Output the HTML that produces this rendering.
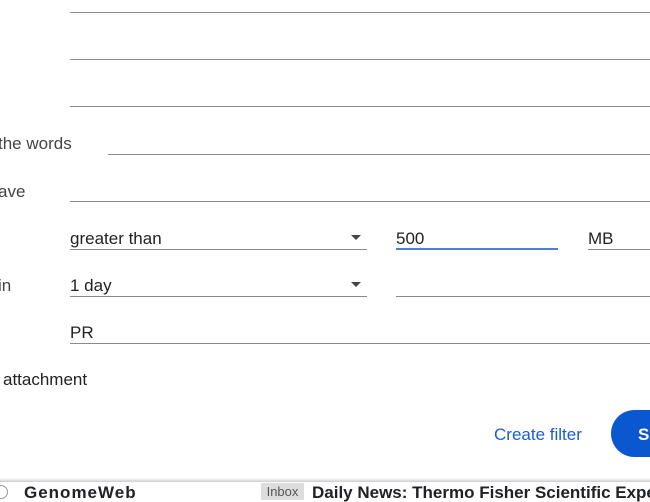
<!DOCTYPE html><html><head><style>
body{margin:0;width:650px;height:500px;overflow:hidden;background:#fff;font-family:"Liberation Sans",Arial,sans-serif;color:#222;position:relative}
.l{position:absolute;height:1px;background:#8a8a8a}
.t{position:absolute;font-size:17px;line-height:18px}
.arr{position:absolute;width:0;height:0;border-left:5px solid transparent;border-right:5px solid transparent;border-top:5px solid #444}
</style></head><body>
<div class="l" style="left:70px;top:12px;width:580px"></div>
<div class="l" style="left:70px;top:59px;width:580px"></div>
<div class="l" style="left:70px;top:106px;width:580px"></div>
<div class="t" style="left:-2px;top:135px;color:#444">the words</div>
<div class="l" style="left:108px;top:154px;width:542px"></div>
<div class="t" style="left:-2px;top:183px;color:#444">ave</div>
<div class="l" style="left:70px;top:201px;width:580px"></div>
<div class="t" style="left:70px;top:230px">greater than</div>
<div class="arr" style="left:351px;top:235px"></div>
<div class="l" style="left:70px;top:249px;width:297px"></div>
<div class="t" style="left:396px;top:230px">500</div>
<div class="l" style="left:396px;top:248px;width:162px;height:2px;background:#4a7fd9"></div>
<div class="t" style="left:588px;top:230px">MB</div>
<div class="l" style="left:588px;top:249px;width:62px"></div>
<div class="t" style="left:-2px;top:277px;color:#444">in</div>
<div class="t" style="left:70px;top:277px">1 day</div>
<div class="arr" style="left:351px;top:282px"></div>
<div class="l" style="left:70px;top:296px;width:297px"></div>
<div class="l" style="left:396px;top:296px;width:254px"></div>
<div class="t" style="left:70px;top:324px">PR</div>
<div class="l" style="left:70px;top:343px;width:580px"></div>
<div class="t" style="left:3px;top:371px">attachment</div>
<div class="t" style="left:494px;top:426px;color:#1a5fd0">Create filter</div>
<div style="position:absolute;left:611px;top:410px;width:80px;height:47px;border-radius:24px;background:#0b57d0"></div>
<div class="t" style="left:638px;top:426px;color:#fff;font-weight:bold">S</div>
<div style="position:absolute;left:0;top:478px;width:650px;height:4px;background:linear-gradient(#fff,#ccc)"></div>
<div style="position:absolute;left:0;top:482px;width:650px;height:18px;background:#fff"></div>
<div style="position:absolute;left:-6px;top:485px;width:12px;height:12px;border:1px solid #999;border-radius:50%"></div>
<div class="t" style="left:24px;top:484px;font-weight:bold;color:#202124;letter-spacing:1px">GenomeWeb</div>
<div style="position:absolute;left:261px;top:483px;width:43px;height:17px;background:#ddd;color:#555;font-size:13px;line-height:17px;text-align:center">Inbox</div>
<div class="t" style="left:312px;top:484px;font-weight:bold;color:#202124;white-space:nowrap">Daily News: Thermo Fisher Scientific Expe</div>
</body></html>
